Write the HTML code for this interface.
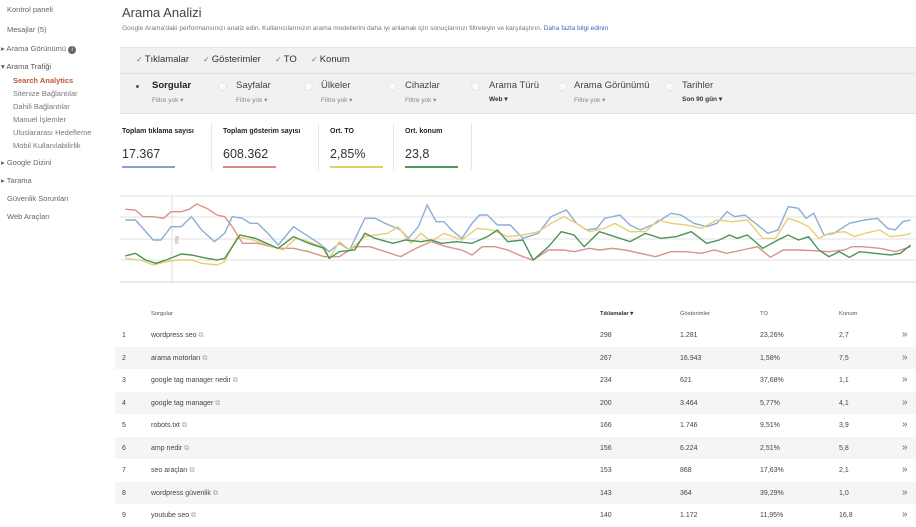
<!DOCTYPE html>
<html><head><meta charset="utf-8"><style>
*{margin:0;padding:0;box-sizing:border-box}
body{width:916px;height:523px;overflow:hidden;background:#fff;font-family:"Liberation Sans",sans-serif;color:#444;position:relative}
.a{position:absolute;white-space:nowrap}
.nav{font-size:7.5px;color:#666}
.sub{font-size:7.5px;color:#777}
.panel{position:absolute;left:120px;top:47px;width:796px;height:67px;background:#f1f1f1;border-top:1px solid #e3e3e3;border-bottom:1px solid #e3e3e3}
.ck{font-size:9.5px;color:#333}
.ck i{font-style:normal;color:#777;font-size:8px;margin-right:2px}
.dim{font-size:9.5px;color:#444}
.fy{font-size:6.5px;color:#888}
.rad{position:absolute;width:9px;height:9px;border-radius:50%;background:#fafafa;border:1px solid #e6e6e6}
.ml{font-size:7px;font-weight:bold;color:#222}
.mv{font-size:12.5px;color:#333}
.bar{position:absolute;height:2px}
.sep{position:absolute;width:1px;background:#e8e8e8;top:123px;height:47px}
.row{position:absolute;left:115px;width:801px;height:22.5px;font-size:7px;color:#444}
.row.g{background:#f5f5f5}
.row span{position:absolute;top:8px}
.ext{color:#aaa;font-size:7px;font-weight:normal}
</style></head><body>
<div class="a nav" style="left:7px;top:5px">Kontrol paneli</div>
<div class="a nav" style="left:7px;top:25px">Mesajlar (5)</div>
<div class="a nav" style="left:1px;top:44px">▸ Arama Görünümü <span style="display:inline-block;width:8px;height:8px;border-radius:50%;background:#666;color:#fff;font-size:6px;text-align:center;line-height:8px">i</span></div>
<div class="a nav" style="left:1px;top:62px;color:#555">▾ Arama Trafiği</div>
<div class="a" style="left:13px;top:76px;font-size:7.5px;color:#c0553a;font-weight:bold">Search Analytics</div>
<div class="a sub" style="left:13px;top:89px">Sitenize Bağlantılar</div>
<div class="a sub" style="left:13px;top:102px">Dahili Bağlantılar</div>
<div class="a sub" style="left:13px;top:115px">Manuel İşlemler</div>
<div class="a sub" style="left:13px;top:128px">Uluslararası Hedefleme</div>
<div class="a sub" style="left:13px;top:141px">Mobil Kullanılabilirlik</div>
<div class="a nav" style="left:1px;top:158px">▸ Google Dizini</div>
<div class="a nav" style="left:1px;top:176px">▸ Tarama</div>
<div class="a nav" style="left:7px;top:194px">Güvenlik Sorunları</div>
<div class="a nav" style="left:7px;top:212px">Web Araçları</div>

<div class="a" style="left:122px;top:5px;font-size:13px;color:#444">Arama Analizi</div>
<div class="a" style="left:122px;top:25px;font-size:6.6px;color:#777">Google Arama'daki performansınızı analiz edin. Kullanıcılarınızın arama modellerini daha iyi anlamak için sonuçlarınızı filtreleyin ve karşılaştırın. <span style="color:#3b6bb5">Daha fazla bilgi edinin</span></div>

<div class="panel"><div style="position:absolute;left:0;right:0;top:25px;height:1px;background:#e0e0e0"></div></div>
<div class="a ck" style="left:136px;top:54px"><i>✓</i>Tıklamalar</div>
<div class="a ck" style="left:203px;top:54px"><i>✓</i>Gösterimler</div>
<div class="a ck" style="left:275px;top:54px"><i>✓</i>TO</div>
<div class="a ck" style="left:311px;top:54px"><i>✓</i>Konum</div>

<div class="rad" style="left:133px;top:82px;background:none;border:none"><div style="width:3px;height:3px;background:#555;border-radius:50%;margin:3px"></div></div>
<div class="a dim" style="left:152px;top:80px;font-weight:bold;color:#222">Sorgular</div>
<div class="a fy" style="left:152px;top:96px">Filtre yok ▾</div>
<div class="rad" style="left:218px;top:82px"></div>
<div class="a dim" style="left:236px;top:80px">Sayfalar</div>
<div class="a fy" style="left:236px;top:96px">Filtre yok ▾</div>
<div class="rad" style="left:304px;top:82px"></div>
<div class="a dim" style="left:321px;top:80px">Ülkeler</div>
<div class="a fy" style="left:321px;top:96px">Filtre yok ▾</div>
<div class="rad" style="left:388px;top:82px"></div>
<div class="a dim" style="left:405px;top:80px">Cihazlar</div>
<div class="a fy" style="left:405px;top:96px">Filtre yok ▾</div>
<div class="rad" style="left:471px;top:82px"></div>
<div class="a dim" style="left:489px;top:80px">Arama Türü</div>
<div class="a fy" style="left:489px;top:95px;font-weight:bold;color:#333">Web ▾</div>
<div class="rad" style="left:558px;top:82px"></div>
<div class="a dim" style="left:574px;top:80px">Arama Görünümü</div>
<div class="a fy" style="left:574px;top:96px">Filtre yok ▾</div>
<div class="rad" style="left:665px;top:82px"></div>
<div class="a dim" style="left:682px;top:80px">Tarihler</div>
<div class="a fy" style="left:682px;top:95px;font-weight:bold;color:#333">Son 90 gün ▾</div>

<div class="a ml" style="left:122px;top:128px">Toplam tıklama sayısı</div>
<div class="a mv" style="left:122px;top:147px">17.367</div>
<div class="bar" style="left:122px;top:166px;width:53px;background:#7ea3cf"></div>
<div class="sep" style="left:211px"></div>
<div class="a ml" style="left:223px;top:128px">Toplam gösterim sayısı</div>
<div class="a mv" style="left:223px;top:147px">608.362</div>
<div class="bar" style="left:223px;top:166px;width:53px;background:#d98a85"></div>
<div class="sep" style="left:318px"></div>
<div class="a ml" style="left:330px;top:128px">Ort. TO</div>
<div class="a mv" style="left:330px;top:147px">2,85%</div>
<div class="bar" style="left:330px;top:166px;width:53px;background:#e8cc6c"></div>
<div class="sep" style="left:393px"></div>
<div class="a ml" style="left:405px;top:128px">Ort. konum</div>
<div class="a mv" style="left:405px;top:147px">23,8</div>
<div class="bar" style="left:405px;top:166px;width:53px;background:#4c9a57"></div>
<div class="sep" style="left:471px"></div>

<svg class="a" style="left:0;top:0" width="916" height="300">
<g stroke="#e2e2e2" stroke-width="1">
<line x1="120" y1="196" x2="916" y2="196"/><line x1="120" y1="217" x2="916" y2="217"/><line x1="120" y1="239" x2="916" y2="239"/><line x1="120" y1="260" x2="916" y2="260"/><line x1="120" y1="282" x2="916" y2="282" stroke="#d6d6d6"/>
<line x1="172" y1="196" x2="172" y2="282"/></g>
<text x="175" y="236" font-size="5" fill="#999" transform="rotate(90 175 236)" font-family="Liberation Sans">Not</text>
<g transform="translate(115,180) scale(0.51,0.33333)" fill="none" stroke-width="1.4">
<polyline vector-effect="non-scaling-stroke" stroke="#d9928c" points="20,88 40,90 55,110 75,110 95,115 110,95 130,95 145,88 160,72 180,85 200,105 215,110 230,140 250,190 280,190 320,205 350,205 380,215 410,230 440,230 470,200 500,200 530,215 560,230 590,205 620,185 650,200 680,210 700,225 720,200 745,200 770,210 800,230 820,240 850,210 880,210 900,215 930,205 950,210 975,205 1000,210 1030,220 1060,230 1090,215 1120,215 1150,220 1175,210 1200,220 1230,210 1260,200 1285,232 1310,210 1340,210 1370,212 1400,215 1430,210 1445,200 1465,200 1500,205 1530,215 1560,200"/>
<polyline vector-effect="non-scaling-stroke" stroke="#8aaed6" points="20,120 40,120 75,180 90,180 110,140 130,140 150,110 170,150 195,185 215,160 230,110 250,115 265,130 280,130 300,160 320,195 350,140 380,170 400,190 420,215 440,190 460,210 490,115 510,115 530,130 560,150 575,175 595,140 612,75 630,125 645,125 660,150 680,175 700,130 715,105 730,105 750,135 775,135 800,175 830,160 855,110 885,90 905,130 925,150 945,145 960,115 990,105 1010,135 1030,150 1060,130 1090,100 1110,105 1135,130 1160,140 1180,130 1200,95 1215,110 1235,105 1260,135 1280,160 1300,150 1320,80 1340,85 1355,115 1370,100 1390,165 1410,160 1440,130 1470,120 1495,115 1515,145 1530,150 1545,125 1560,120"/>
<polyline vector-effect="non-scaling-stroke" stroke="#e8cf72" points="20,235 50,240 75,255 100,245 125,240 150,240 170,250 200,255 215,245 240,170 270,180 300,195 330,210 355,175 380,185 405,200 420,235 440,185 460,210 490,170 510,165 535,160 555,140 580,190 600,160 620,185 645,160 680,180 710,145 740,150 770,170 800,165 830,155 855,130 880,110 905,130 930,155 960,145 980,130 1010,155 1040,155 1065,120 1090,130 1120,135 1150,145 1180,120 1210,125 1240,120 1270,175 1295,175 1320,115 1340,125 1360,140 1380,175 1400,160 1430,155 1450,170 1470,160 1500,150 1520,170 1550,165 1560,160"/>
<polyline vector-effect="non-scaling-stroke" stroke="#4a9456" points="20,228 40,220 60,240 80,250 100,240 130,222 150,225 180,235 200,240 215,235 245,165 275,175 320,205 350,170 380,190 410,205 420,235 440,215 470,210 490,160 510,175 545,190 570,180 600,185 620,180 640,190 670,185 700,190 730,170 750,150 770,185 800,180 820,240 850,200 875,155 900,165 920,200 950,155 980,170 1010,185 1040,160 1070,175 1100,170 1130,155 1160,190 1185,180 1205,165 1220,175 1240,165 1270,205 1300,180 1320,165 1340,180 1360,170 1380,210 1400,230 1420,215 1440,232 1460,215 1490,220 1520,225 1540,220 1560,195"/>
</g></svg>

<div class="row" style="top:303px;height:21px;font-size:5.8px;color:#555"><span style="left:36px;top:8px">Sorgular</span><span style="left:485px;top:8px;font-weight:bold;color:#333">Tıklamalar ▾</span><span style="left:565px;top:8px">Gösterimler</span><span style="left:645px;top:8px">TO</span><span style="left:724px;top:8px">Konum</span></div>

<div class="row" style="top:324px"><span style="left:7px">1</span><span style="left:36px">wordpress seo <b class="ext">⧉</b></span><span style="left:485px">298</span><span style="left:565px">1.281</span><span style="left:645px">23,26%</span><span style="left:724px">2,7</span><span style="left:787px;font-size:10px;top:5px;color:#666">»</span></div>
<div class="row g" style="top:346.5px"><span style="left:7px">2</span><span style="left:36px">arama motorları <b class="ext">⧉</b></span><span style="left:485px">267</span><span style="left:565px">16.943</span><span style="left:645px">1,58%</span><span style="left:724px">7,5</span><span style="left:787px;font-size:10px;top:5px;color:#666">»</span></div>
<div class="row" style="top:369px"><span style="left:7px">3</span><span style="left:36px">google tag manager nedir <b class="ext">⧉</b></span><span style="left:485px">234</span><span style="left:565px">621</span><span style="left:645px">37,68%</span><span style="left:724px">1,1</span><span style="left:787px;font-size:10px;top:5px;color:#666">»</span></div>
<div class="row g" style="top:391.5px"><span style="left:7px">4</span><span style="left:36px">google tag manager <b class="ext">⧉</b></span><span style="left:485px">200</span><span style="left:565px">3.464</span><span style="left:645px">5,77%</span><span style="left:724px">4,1</span><span style="left:787px;font-size:10px;top:5px;color:#666">»</span></div>
<div class="row" style="top:414px"><span style="left:7px">5</span><span style="left:36px">robots.txt <b class="ext">⧉</b></span><span style="left:485px">166</span><span style="left:565px">1.746</span><span style="left:645px">9,51%</span><span style="left:724px">3,9</span><span style="left:787px;font-size:10px;top:5px;color:#666">»</span></div>
<div class="row g" style="top:436.5px"><span style="left:7px">6</span><span style="left:36px">amp nedir <b class="ext">⧉</b></span><span style="left:485px">156</span><span style="left:565px">6.224</span><span style="left:645px">2,51%</span><span style="left:724px">5,8</span><span style="left:787px;font-size:10px;top:5px;color:#666">»</span></div>
<div class="row" style="top:459px"><span style="left:7px">7</span><span style="left:36px">seo araçları <b class="ext">⧉</b></span><span style="left:485px">153</span><span style="left:565px">868</span><span style="left:645px">17,63%</span><span style="left:724px">2,1</span><span style="left:787px;font-size:10px;top:5px;color:#666">»</span></div>
<div class="row g" style="top:481.5px"><span style="left:7px">8</span><span style="left:36px">wordpress güvenlik <b class="ext">⧉</b></span><span style="left:485px">143</span><span style="left:565px">364</span><span style="left:645px">39,29%</span><span style="left:724px">1,0</span><span style="left:787px;font-size:10px;top:5px;color:#666">»</span></div>
<div class="row" style="top:504px"><span style="left:7px">9</span><span style="left:36px">youtube seo <b class="ext">⧉</b></span><span style="left:485px">140</span><span style="left:565px">1.172</span><span style="left:645px">11,95%</span><span style="left:724px">16,8</span><span style="left:787px;font-size:10px;top:5px;color:#666">»</span></div>
</body></html>
